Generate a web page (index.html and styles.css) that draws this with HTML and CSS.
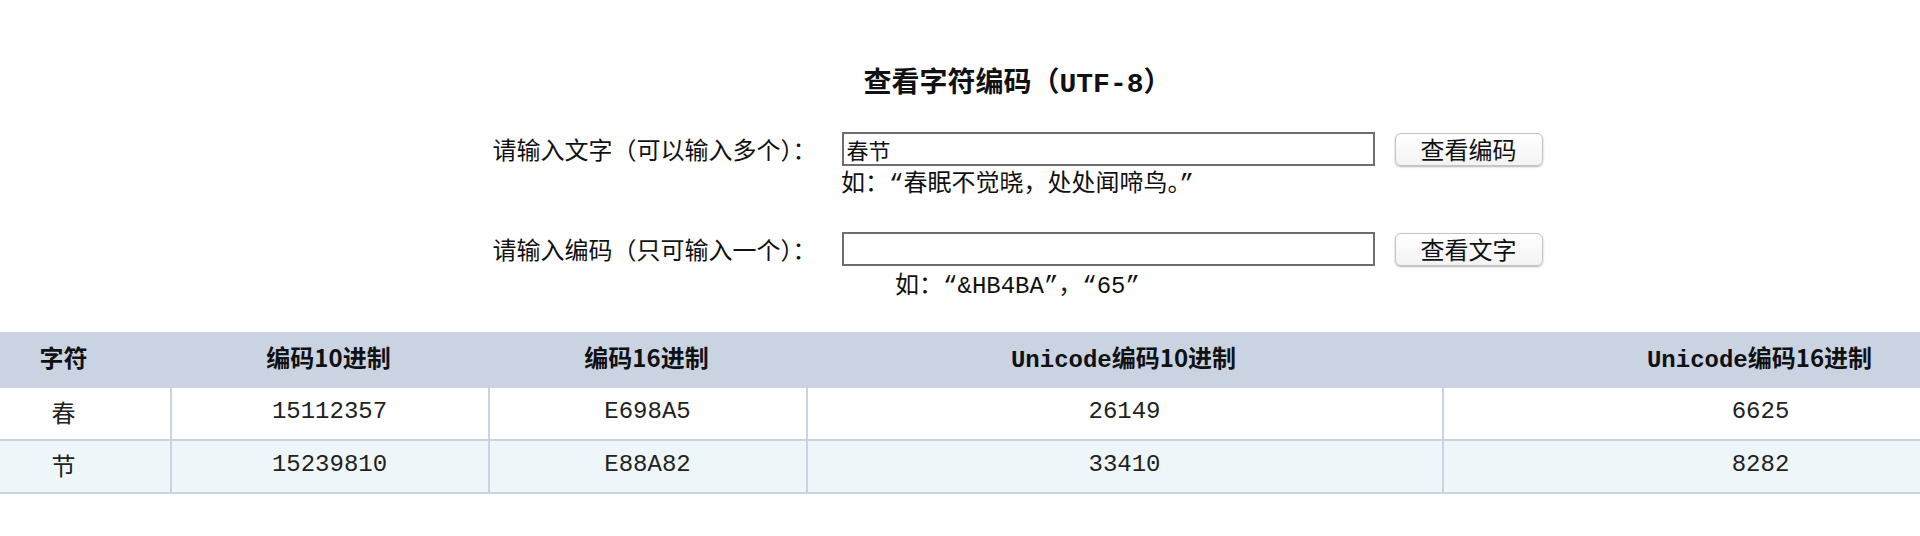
FILE: index.html
```html
<!DOCTYPE html>
<html lang="zh-CN">
<head>
<meta charset="utf-8">
<title>查看字符编码（UTF-8）</title>
<link rel="stylesheet" href="styles.css">
</head>
<body>
<div class="page">
  <h1 class="title">查看字符编码（UTF-8）</h1>

  <div class="row">
    <label class="label" for="txt">请输入文字（可以输入多个）：</label>
    <input class="field" id="txt" type="text" value="春节">
    <button class="btn" type="button">查看编码</button>
  </div>
  <div class="example">如：“春眠不觉晓，处处闻啼鸟。”</div>

  <div class="row row-second">
    <label class="label" for="code">请输入编码（只可输入一个）：</label>
    <input class="field" id="code" type="text" value="">
    <button class="btn" type="button">查看文字</button>
  </div>
  <div class="example example-second">如：“&amp;HB4BA”，“65”</div>

  <div class="table-wrap">
    <table class="codes">
      <colgroup>
        <col class="c1"><col class="c2"><col class="c3"><col class="c4"><col class="c5">
      </colgroup>
      <thead>
        <tr>
          <th>字符</th>
          <th>编码10进制</th>
          <th>编码16进制</th>
          <th><span class="mono">Unicode</span>编码10进制</th>
          <th><span class="mono">Unicode</span>编码16进制</th>
        </tr>
      </thead>
      <tbody>
        <tr>
          <td>春</td><td>15112357</td><td>E698A5</td><td>26149</td><td>6625</td>
        </tr>
        <tr class="alt">
          <td>节</td><td>15239810</td><td>E88A82</td><td>33410</td><td>8282</td>
        </tr>
      </tbody>
    </table>
  </div>
</div>
</body>
</html>
```
FILE: styles.css
```css
html, body {
  margin: 0;
  padding: 0;
  background: #ffffff;
  overflow: hidden;
}

body {
  color: #111;
  font-family: "Liberation Mono", "Noto Sans CJK SC", monospace;
}

.page {
  width: 2035px;
  padding-top: 65px;
  text-align: center;
}

.title {
  margin: 0;
  font-size: 28px;
  line-height: 40px;
  font-weight: bold;
  color: #111;
  font-family: "Liberation Mono", "Noto Sans CJK SC", monospace;
}

.row {
  display: flex;
  justify-content: center;
  align-items: center;
  height: 34px;
  margin-top: 27px;
}

.row-second {
  margin-top: 32px;
}

.label {
  font-family: "Noto Sans CJK SC", sans-serif;
  font-size: 24px;
  line-height: 34px;
  color: #111;
  margin-right: 25px;
}

.field {
  box-sizing: border-box;
  width: 533px;
  height: 34px;
  margin: 0 20px 0 0;
  padding: 0 3px;
  border: 2px solid #6e6e6e;
  border-radius: 0;
  background: #fff;
  font-family: "Noto Sans CJK SC", sans-serif;
  font-size: 22px;
  color: #111;
  outline: none;
}

.btn {
  box-sizing: border-box;
  width: 148px;
  height: 33px;
  margin: 0;
  padding: 0;
  border: 1px solid #c4c4c4;
  border-radius: 6px;
  background: linear-gradient(#ffffff, #f3f3f3);
  box-shadow: 0 1px 2px rgba(0, 0, 0, 0.3);
  font-family: "Noto Sans CJK SC", sans-serif;
  font-size: 24px;
  line-height: 30px;
  color: #111;
}

.example {
  margin-top: 4px;
  font-size: 24px;
  line-height: 30px;
  color: #111;
}

.example-second {
  margin-top: 6px;
}

.table-wrap {
  display: flex;
  justify-content: center;
  margin-top: 30px;
}

.codes {
  flex: none;
  width: 2120px;
  table-layout: fixed;
  border-collapse: separate;
  border-spacing: 0;
}

.c1 { width: 10%; }
.c2 { width: 15%; }
.c3 { width: 15%; }
.c4 { width: 30%; }
.c5 { width: 30%; }

.codes th {
  height: 56px;
  padding: 0 0 8px 0;
  box-sizing: border-box;
  background: #c9d3e2;
  font-family: "Noto Sans CJK SC", sans-serif;
  font-size: 24px;
  font-weight: bold;
  color: #111;
  text-align: center;
  vertical-align: middle;
}

.mono {
  font-family: "Liberation Mono", monospace;
}

.codes td {
  box-sizing: border-box;
  height: 53px;
  padding: 0 0 4px 0;
  background: #ffffff;
  border-bottom: 2px solid #c9d3e2;
  border-left: 2px solid #c9d3e2;
  font-size: 24px;
  color: #222;
  text-align: center;
  vertical-align: middle;
}

.codes td:first-child {
  border-left: none;
}

.codes .alt td {
  background: #eff6fa;
}
```
